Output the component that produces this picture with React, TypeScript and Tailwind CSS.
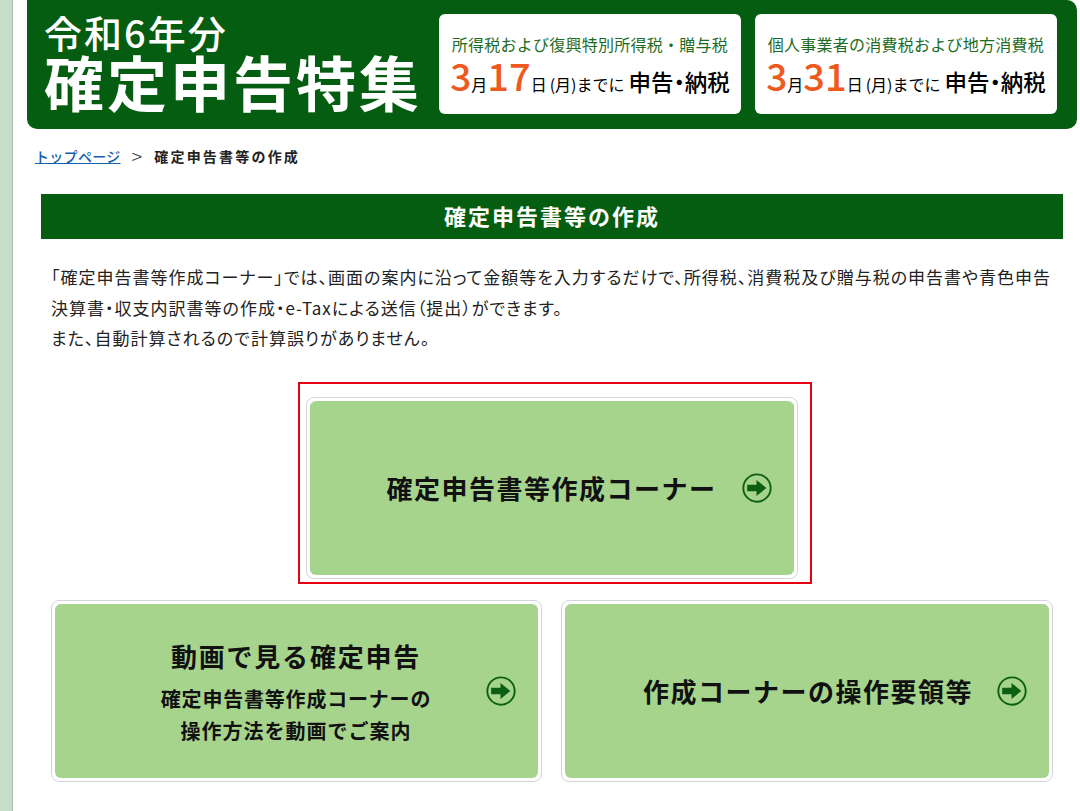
const font = { fontFamily: '"Noto Sans CJK JP", "Liberation Sans", sans-serif' };

// 矢印アイコン
function ArrowIcon() {
  return (
    <svg width="30" height="30" viewBox="0 0 32 32" className="shrink-0">
      <circle cx="16" cy="16" r="14.6" fill="none" stroke="#0b5f12" strokeWidth="2" />
      <path d="M5.5 12.5H15.5V7.5L26 16L15.5 24.5V19.5H5.5Z" fill="#0b5f12" />
    </svg>
  );
}

function Deadline({ title, day }: { title: string; day: string }) {
  return (
    <div className="w-[302px] h-[100px] rounded-md bg-white flex flex-col items-center justify-center">
      <div className="text-[16px] leading-[20px] tracking-[0.25px] text-[#1d6b24] whitespace-nowrap">{title}</div>
      <div className="flex items-baseline mt-[2px] h-[38px] whitespace-nowrap text-black">
        <span className="text-[37px] leading-[38px] font-medium text-[#ee5a1e]">3</span>
        <span className="text-[16px]">月</span>
        <span className="text-[38px] leading-[38px] font-medium text-[#ee5a1e]">{day}</span>
        <span className="text-[16px]">日</span>
        <span className="text-[16px] ml-[3px]">(月)までに</span>
        <span className="text-[22.5px] font-medium ml-[4px] [font-feature-settings:'palt']">申告・納税</span>
      </div>
    </div>
  );
}

export default function App() {
  return (
    <div style={font} className="h-[811px] w-[1080px] overflow-hidden bg-white flex">
      <div className="w-[13px] shrink-0 bg-[#c6dec9] border-r border-r-[#a3bfa8]" />
      <div className="flex-1 pl-[14px]">
        {/* バナー */}
        <header className="w-[1050px] h-[129px] bg-[#045d10] rounded-b-[10px] rounded-tr-[10px] flex justify-between pl-[17px] pr-[20px] pt-[14px]">
          <div className="text-white">
            <div className="text-[38px] leading-[36px] font-medium tracking-[2px] whitespace-nowrap">令和6年分</div>
            <div className="text-[60px] leading-[62px] font-bold tracking-[3px] whitespace-nowrap">確定申告特集</div>
          </div>
          <div className="flex gap-[14px]">
            <Deadline title="所得税および復興特別所得税・贈与税" day="17" />
            <Deadline title="個人事業者の消費税および地方消費税" day="31" />
          </div>
        </header>

        {/* パンくず */}
        <nav className="flex items-center h-[20px] mt-[17px] ml-[8px] text-[14px] font-medium">
          <a href="#" className="text-[#1560a8] underline tracking-[0.3px]">トップページ</a>
          <span className="ml-[11px] mr-[12px] font-light text-[#333] text-[20px] leading-[20px]">&gt;</span>
          <span className="text-[#222] font-bold tracking-[2.2px]">確定申告書等の作成</span>
        </nav>

        <main className="w-[1022px] ml-[14px] mt-[28px]">
          <h1 className="h-[45px] pb-[3px] bg-[#045d10] text-white text-[22px] font-bold tracking-[2px] flex items-center justify-center">
            確定申告書等の作成
          </h1>
          <div className="mt-[23px] ml-[10px] text-[17px] leading-[30.5px] tracking-[1px] text-[#222] whitespace-nowrap [font-feature-settings:'palt']">
            <p>「確定申告書等作成コーナー」では、画面の案内に沿って金額等を入力するだけで、所得税、消費税及び贈与税の申告書や青色申告</p>
            <p>決算書・収支内訳書等の作成・e-Taxによる送信（提出）ができます。</p>
            <p>また、自動計算されるので計算誤りがありません。</p>
          </div>

          {/* メインボタン */}
          <div className="mt-[28px] ml-[257px] w-[514px] h-[202px] border-2 border-[#e60012] pl-[6px] pt-[13px]">
            <a href="#" className="block w-[492px] h-[182px] rounded-lg border border-[#d3d3dc] p-[3px]">
              <div className="h-full rounded-md bg-[#a7d48d] flex items-center justify-center gap-[25px] pl-[54px]">
                <span className="text-[26px] font-bold tracking-[1.5px] text-[#111] whitespace-nowrap">確定申告書等作成コーナー</span>
                <ArrowIcon />
              </div>
            </a>
          </div>

          <div className="mt-[16px] ml-[10px] flex gap-[19px]">
            <a href="#" className="block w-[491px] h-[182px] rounded-lg border border-[#d3d3dc] p-[3px]">
              <div className="h-full rounded-md bg-[#a7d48d] flex items-center pl-[91px] gap-[40px]">
                <div className="w-[300px] pt-[4px] flex flex-col items-center text-[#111] font-bold">
                  <span className="text-[26px] leading-[36px] tracking-[1.8px]">動画で見る確定申告</span>
                  <span className="text-[20px] leading-[32px] tracking-[0.8px] mt-[9px]">確定申告書等作成コーナーの</span>
                  <span className="text-[20px] leading-[32px] tracking-[1px]">操作方法を動画でご案内</span>
                </div>
                <ArrowIcon />
              </div>
            </a>
            <a href="#" className="block w-[492px] h-[182px] rounded-lg border border-[#d3d3dc] p-[3px]">
              <div className="h-full rounded-md bg-[#a7d48d] flex items-center justify-center gap-[24px] pl-[56px]">
                <span className="text-[26px] font-bold tracking-[1.5px] text-[#111] whitespace-nowrap">作成コーナーの操作要領等</span>
                <ArrowIcon />
              </div>
            </a>
          </div>
        </main>
      </div>
    </div>
  );
}
